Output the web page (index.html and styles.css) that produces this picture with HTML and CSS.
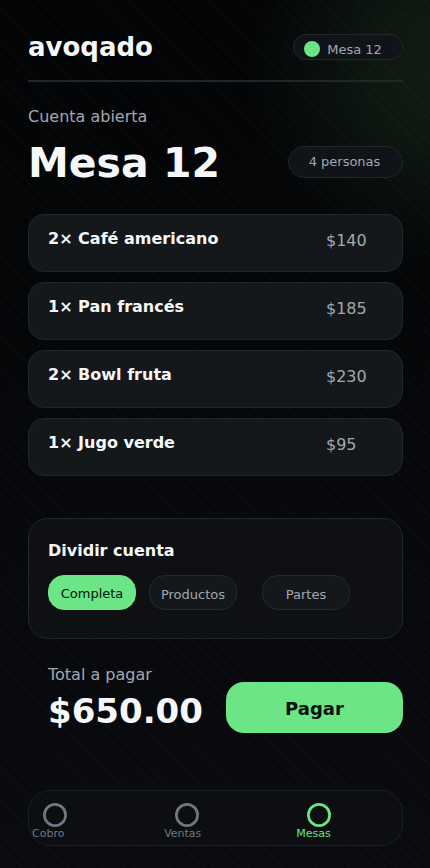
FILE: index.html
```html
<!DOCTYPE html>
<html lang="es">
<head>
<meta charset="utf-8">
<meta name="viewport" content="width=device-width, initial-scale=1">
<title>avoqado – Mesa 12</title>
<link rel="stylesheet" href="styles.css">
</head>
<body>
<div class="app">
  <header class="topbar">
    <span class="brand">avoqado</span>
    <span class="pill status"><span class="dot"></span>Mesa 12</span>
  </header>
  <main>
    <p class="eyebrow">Cuenta abierta</p>
    <div class="heading">
      <h1>Mesa 12</h1>
      <span class="pill guests">4 personas</span>
    </div>
    <ul class="items">
      <li class="item"><span class="name">2× Café americano</span><span class="price">$140</span></li>
      <li class="item"><span class="name">1× Pan francés</span><span class="price">$185</span></li>
      <li class="item"><span class="name">2× Bowl fruta</span><span class="price">$230</span></li>
      <li class="item"><span class="name">1× Jugo verde</span><span class="price">$95</span></li>
    </ul>
    <section class="split">
      <h2>Dividir cuenta</h2>
      <div class="chips">
        <button type="button" class="chip active">Completa</button>
        <button type="button" class="chip">Productos</button>
        <button type="button" class="chip">Partes</button>
      </div>
    </section>
    <section class="checkout">
      <div class="total">
        <p class="label">Total a pagar</p>
        <p class="amount">$650.00</p>
      </div>
      <button type="button" class="pay">Pagar</button>
    </section>
  </main>
  <nav class="tabs">
    <a href="#cobro" class="tab"><svg viewBox="0 0 24 24" aria-hidden="true"><circle cx="12" cy="12" r="10.6"/></svg>Cobro</a>
    <a href="#ventas" class="tab"><svg viewBox="0 0 24 24" aria-hidden="true"><circle cx="12" cy="12" r="10.6"/></svg>Ventas</a>
    <a href="#mesas" class="tab current" aria-current="page"><svg viewBox="0 0 24 24" aria-hidden="true"><circle cx="12" cy="12" r="10.6"/></svg>Mesas</a>
  </nav>
</div>
</body>
</html>
```
FILE: styles.css
```css
:root {
  --text: #f6f7f9;
  --muted: #a1a8b0;
  --line: #21262b;
  --green: #6be585;
}

* { box-sizing: border-box; margin: 0; padding: 0; }

body {
  font-family: "DejaVu Sans", sans-serif;
  font-size: 16px;
  color: var(--text);
  background: #050608;
}

.app {
  min-height: 100vh;
  padding: 34px 27px 22px 28px;
  background:
    repeating-linear-gradient(45deg, rgba(255, 255, 255, 0.018) 0 1px, transparent 1px 8px),
    radial-gradient(circle at 104% 8%, #101c13 0, rgba(15, 27, 18, 0.85) 70px, transparent 200px),
    linear-gradient(#030406, #040507 30%, #07080b 58%, #0a0b0f);
}

.topbar {
  display: flex;
  justify-content: space-between;
  align-items: flex-start;
  height: 48px;
  border-bottom: 2px solid var(--line);
}

.brand { font-size: 26px; font-weight: 700; line-height: 26px; }

.pill {
  display: flex;
  align-items: center;
  justify-content: center;
  border: 1px solid var(--line);
  border-radius: 16px;
  background: #101318;
  color: var(--muted);
  font-size: 13px;
}

.status { width: 110px; height: 26px; padding-top: 4px; padding-right: 10px; gap: 7px; }
.dot { width: 16px; height: 16px; border-radius: 50%; background: var(--green); }

.eyebrow { margin-top: 25px; line-height: 20px; color: var(--muted); }

.heading { display: flex; justify-content: space-between; align-items: center; height: 69px; }
h1 { padding-top: 2px; font-size: 41px; line-height: 48px; }
.guests { width: 115px; height: 32px; padding-right: 2px; }

.items { list-style: none; display: grid; gap: 10px; margin-top: 18px; }

.item {
  display: flex;
  justify-content: space-between;
  height: 58px;
  padding: 14px 19px;
  border: 1px solid var(--line);
  border-radius: 16px;
  background: #14181b;
  line-height: 20px;
}
.name { font-weight: 700; }
.price { width: 57px; padding-top: 2px; color: var(--muted); }

.split {
  margin-top: 42px;
  padding: 22px 19px 28px;
  border: 1px solid var(--line);
  border-radius: 20px;
  background: #0e1014;
}
h2 { font-size: 16px; line-height: 20px; }

.chips { display: flex; gap: 13px; margin-top: 14px; }
.chip {
  width: 88px;
  height: 35px;
  padding-top: 4px;
  border: 1px solid #22282c;
  border-radius: 16px;
  background: #14181b;
  color: var(--muted);
  font: 13px "DejaVu Sans", sans-serif;
}
.chip:last-child { margin-left: 12px; }
.chip.active { padding-top: 2px; border-color: var(--green); background: var(--green); color: #06120a; }

.checkout { display: flex; justify-content: space-between; margin-top: 26px; padding-left: 20px; }
.label { line-height: 20px; color: var(--muted); }
.amount { margin-top: 6px; font-size: 34px; font-weight: 700; line-height: 40px; }
.pay {
  width: 177px;
  height: 51px;
  margin-top: 17px;
  padding-top: 2px;
  border: 0;
  border-radius: 18px;
  background: var(--green);
  color: #06120a;
  font: 700 18px "DejaVu Sans", sans-serif;
}

.tabs {
  display: grid;
  grid-template-columns: 35fr 35fr 28fr;
  height: 56px;
  margin-top: 57px;
  padding-left: 3px;
  border: 1px solid #1b1f24;
  border-radius: 22px;
  background: #0c0e12;
}
.tab {
  padding-top: 12px;
  color: #6f7882;
  font-size: 11px;
  line-height: 14px;
  text-decoration: none;
}
.tab svg { display: block; width: 24px; height: 24px; margin-left: 11px; fill: none; stroke: currentColor; stroke-width: 2.7; }
.tab.current { color: var(--green); }
```
